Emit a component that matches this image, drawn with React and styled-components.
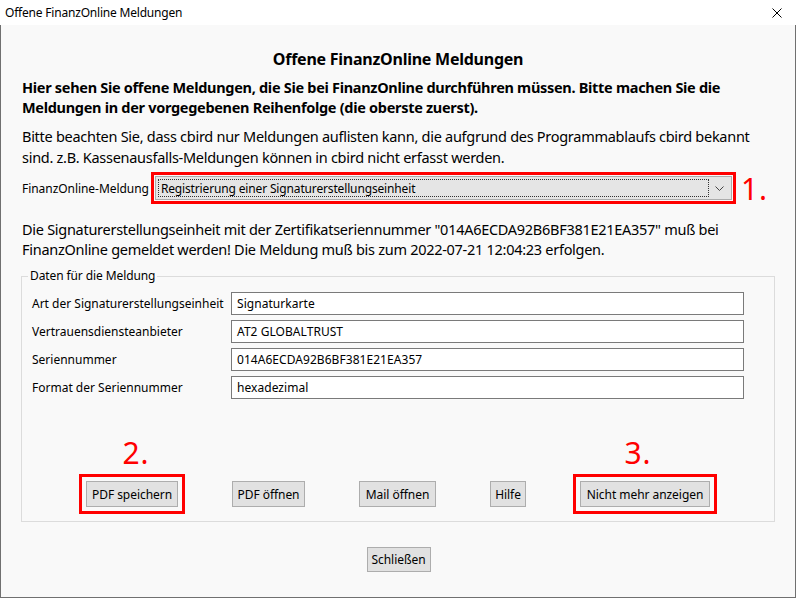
import React from "react";
import styled, { createGlobalStyle } from "styled-components";

const Global = createGlobalStyle`
  html, body { margin: 0; padding: 0; background: #f9f9f9; }
  body { font-family: "Noto Sans", "Open Sans", sans-serif; color: #000; }
  * { box-sizing: border-box; }
`;

const Window = styled.div`
  width: 796px;
  height: 598px;
  display: flex;
  flex-direction: column;
  background: #f9f9f9;
  overflow: hidden;
`;

const TitleBar = styled.div`
  height: 25px;
  flex: none;
  background: #fff;
  display: flex;
  align-items: center;
  justify-content: space-between;
  padding: 0 10px 0 5px;
  font-size: 12px;
  letter-spacing: -0.2px;
`;

const CloseButton = styled.div`
  width: 14px;
  height: 14px;
  display: flex;
  align-items: center;
  justify-content: center;
  margin-right: 2px;
`;

const Body = styled.div`
  flex: 1;
  display: flex;
  flex-direction: column;
  border: 1px solid #707070;
  border-top: none;
  padding: 0 20px;
`;

const Heading = styled.div`
  margin-top: 24px;
  text-align: center;
  font-weight: 700;
  font-size: 16px;
  line-height: 20px;
  letter-spacing: -0.25px;
`;

const Para = styled.div`
  margin-top: ${(p) => p.$mt}px;
  font-size: 14.5px;
  line-height: ${(p) => p.$lh || 20}px;
  font-weight: ${(p) => (p.$bold ? 700 : 400)};
  letter-spacing: ${(p) => (p.$bold ? "-0.3px" : "-0.28px")};
  padding-left: 1px;
  white-space: nowrap;
`;

const ComboRow = styled.div`
  margin-top: 8px;
  display: flex;
  align-items: center;
  gap: 6px;
  padding-left: 1px;
`;

const SmallLabel = styled.span`
  font-size: 12px;
  letter-spacing: -0.05px;
`;

const Combo = styled.div`
  position: relative;
  width: 577px;
  height: 24px;
  background: #e5e5e5;
  border: 1px solid #acacac;
  outline: 3px solid #f00;
  outline-offset: 1px;
  display: flex;
  align-items: center;
  padding: 2px;
`;

const ComboFocus = styled.div`
  flex: 1;
  height: 100%;
  border: 1px dotted #333;
  display: flex;
  align-items: center;
  padding-left: 2px;
  font-size: 12px;
  letter-spacing: -0.15px;
`;

const Chevron = styled.div`
  width: 18px;
  display: flex;
  align-items: center;
  justify-content: center;
  margin-left: 2px;
`;

const Mark = styled.span`
  position: absolute;
  color: #f00;
  font-size: 30px;
  line-height: 30px;
  letter-spacing: 1px;
  white-space: nowrap;
`;

const ComboMark = styled(Mark)`
  left: calc(100% + 10px);
  top: -3px;
`;

const Group = styled.fieldset`
  margin: 9px 0 0;
  padding: 8px 30px 14px 10px;
  border: 1px solid #dcdcdc;
  min-width: 0;
  display: flex;
  flex-direction: column;
`;

const Legend = styled.legend`
  font-size: 12px;
  padding: 0 2px;
  margin-left: -4px;
  line-height: 16px;
  letter-spacing: -0.1px;
`;

const Fields = styled.div`
  display: flex;
  flex-direction: column;
  gap: 5px;
`;

const FieldRow = styled.div`
  display: flex;
  align-items: center;
`;

const FieldLabel = styled.span`
  width: 199px;
  font-size: 12px;
  letter-spacing: 0;
  white-space: nowrap;
`;

const Input = styled.div`
  width: 513px;
  height: 23px;
  border: 1px solid #7a7a7a;
  background: #fff;
  display: flex;
  align-items: center;
  padding-left: 5px;
  font-size: 12px;
  letter-spacing: 0.05px;
`;

const ButtonRow = styled.div`
  margin-top: 82px;
  display: flex;
  justify-content: center;
  gap: 54px;
  padding-left: 20px;
`;

const ButtonSlot = styled.div`
  position: relative;
  display: flex;
  justify-content: center;
`;

const Button = styled.button`
  height: ${(p) => p.$h || 26}px;
  width: ${(p) => p.$w}px;
  padding: 0;
  background: #e1e1e1;
  border: 1px solid #adadad;
  font-family: inherit;
  font-size: 12px;
  letter-spacing: -0.05px;
  color: #000;
  outline: ${(p) => (p.$marked ? "3px solid #f00" : "none")};
  outline-offset: 4px;
`;

const ButtonMark = styled(Mark)`
  bottom: calc(100% + 13px);
  left: 50%;
  transform: translateX(-50%);
  margin-left: ${(p) => p.$dx || 0}px;
`;

const Footer = styled.div`
  display: flex;
  justify-content: center;
  margin-top: 25px;
  padding-left: 1px;
`;

export default function App() {
  const fields = [
    ["Art der Signaturerstellungseinheit", "Signaturkarte"],
    ["Vertrauensdiensteanbieter", "AT2 GLOBALTRUST"],
    ["Seriennummer", "014A6ECDA92B6BF381E21EA357"],
    ["Format der Seriennummer", "hexadezimal"],
  ];
  const buttons = [
    { label: "PDF speichern", w: 92, mark: "2.", dx: 4 },
    { label: "PDF öffnen", w: 73 },
    { label: "Mail öffnen", w: 77 },
    { label: "Hilfe", w: 36 },
    { label: "Nicht mehr anzeigen", w: 130, mark: "3.", dx: -7 },
  ];
  return (
    <>
      <Global />
      <Window>
        <TitleBar>
          <span>Offene FinanzOnline Meldungen</span>
          <CloseButton>
            <svg width="10" height="10" viewBox="0 0 10 10">
              <path d="M0.5 0.5 L9.5 9.5 M9.5 0.5 L0.5 9.5" stroke="#000" strokeWidth="1" fill="none" />
            </svg>
          </CloseButton>
        </TitleBar>
        <Body>
          <Heading>Offene FinanzOnline Meldungen</Heading>
          <Para $bold $mt={8}>
            Hier sehen Sie offene Meldungen, die Sie bei FinanzOnline durchführen müssen. Bitte machen Sie die
            <br />
            Meldungen in der vorgegebenen Reihenfolge (die oberste zuerst).
          </Para>
          <Para $mt={9} $lh={21}>
            Bitte beachten Sie, dass cbird nur Meldungen auflisten kann, die aufgrund des Programmablaufs cbird bekannt
            <br />
            sind. z.B. Kassenausfalls-Meldungen können in cbird nicht erfasst werden.
          </Para>
          <ComboRow>
            <SmallLabel>FinanzOnline-Meldung</SmallLabel>
            <Combo>
              <ComboFocus>Registrierung einer Signaturerstellungseinheit</ComboFocus>
              <Chevron>
                <svg width="9" height="5" viewBox="0 0 9 5">
                  <path d="M0.5 0.5 L4.5 4.5 L8.5 0.5" stroke="#444" strokeWidth="1" fill="none" />
                </svg>
              </Chevron>
              <ComboMark>1.</ComboMark>
            </Combo>
          </ComboRow>
          <Para $mt={19}>
            Die Signaturerstellungseinheit mit der Zertifikatseriennummer "014A6ECDA92B6BF381E21EA357" muß bei
            <br />
            FinanzOnline gemeldet werden! Die Meldung muß bis zum 2022-07-21 12:04:23 erfolgen.
          </Para>
          <Group>
            <Legend>Daten für die Meldung</Legend>
            <Fields>
              {fields.map(([l, v]) => (
                <FieldRow key={l}>
                  <FieldLabel>{l}</FieldLabel>
                  <Input>{v}</Input>
                </FieldRow>
              ))}
            </Fields>
            <ButtonRow>
              {buttons.map((b) => (
                <ButtonSlot key={b.label}>
                  {b.mark && <ButtonMark $dx={b.dx}>{b.mark}</ButtonMark>}
                  <Button $w={b.w} $marked={!!b.mark}>{b.label}</Button>
                </ButtonSlot>
              ))}
            </ButtonRow>
          </Group>
          <Footer>
            <Button $w={64} $h={25}>Schließen</Button>
          </Footer>
        </Body>
      </Window>
    </>
  );
}
